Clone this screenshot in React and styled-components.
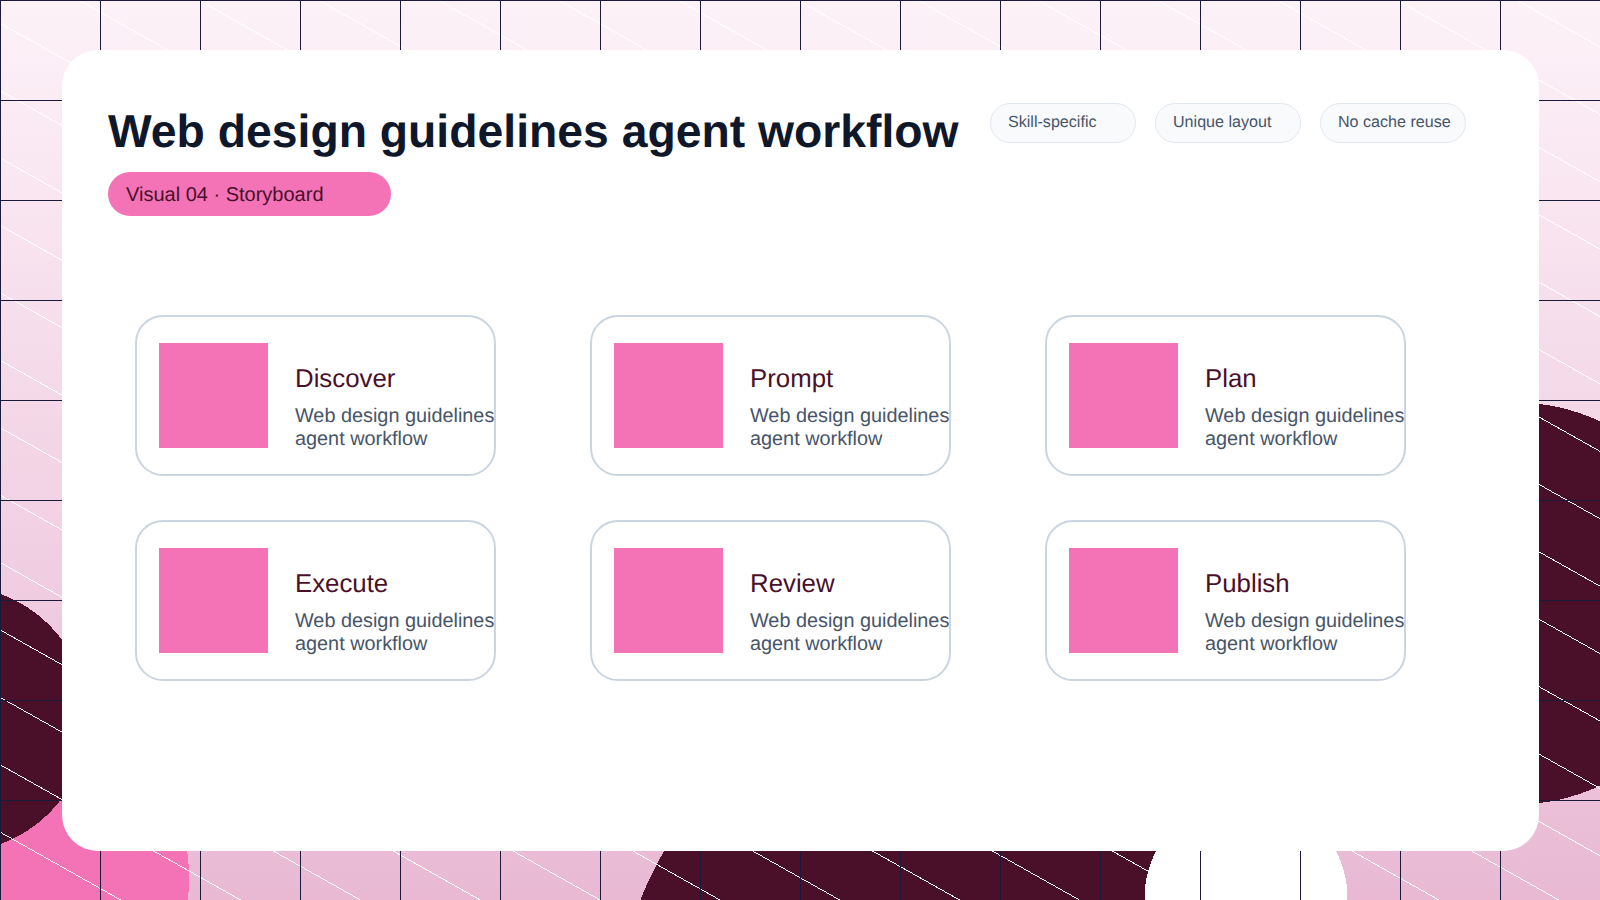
import React from 'react'
import styled, { createGlobalStyle } from 'styled-components'

const GlobalStyle = createGlobalStyle`
  html, body {
    margin: 0;
    padding: 0;
  }
  body {
    font-family: "Liberation Sans", Arial, sans-serif;
    text-rendering: geometricPrecision;
  }
`

const tags = ['Skill-specific', 'Unique layout', 'No cache reuse']
const steps = ['Discover', 'Prompt', 'Plan', 'Execute', 'Review', 'Publish']

const App = () => {
  return (
    <Page>
      <GlobalStyle />
      <Panel>
        <Header>
          <TitleBlock>
            <Title>Web design guidelines agent workflow</Title>
            <Pill>Visual 04 · Storyboard</Pill>
          </TitleBlock>
          <Tags>
            {tags.map((t) => (
              <Tag key={t}>{t}</Tag>
            ))}
          </Tags>
        </Header>
        <Board>
          {steps.map((s) => (
            <Card key={s}>
              <Thumb />
              <CardText>
                <CardTitle>{s}</CardTitle>
                <CardDesc>Web design guidelines agent workflow</CardDesc>
              </CardText>
            </Card>
          ))}
        </Board>
      </Panel>
    </Page>
  )
}

export default App

const Page = styled.div`
  box-sizing: border-box;
  width: 1600px;
  height: 900px;
  overflow: hidden;
  padding: 50px 61px 49px 62px;
  background:
    linear-gradient(90deg, #1a1a3a 1px, transparent 1px) 0 0 / 100px 100px,
    linear-gradient(180deg, #1a1a3a 1px, transparent 1px) 0 0 / 100px 100px,
    repeating-linear-gradient(to top right, #fff 0, #fff 0.9px, transparent 0.9px, transparent 58.75px),
    radial-gradient(circle 101.5px at 1246px 898px, #fff 100%, transparent 100%),
    radial-gradient(circle 201px at 1515px 603.5px, #4a102a 100%, transparent 100%),
    radial-gradient(circle 332px at 950px 1020px, #4a102a 100%, transparent 100%),
    radial-gradient(circle 133px at -45px 719px, #4a102a 100%, transparent 100%),
    radial-gradient(circle 189px at 0 878px, #f472b6 100%, transparent 100%),
    linear-gradient(180deg, #fdf2f8, #e9b9d4);
`
const Panel = styled.div`
  box-sizing: border-box;
  height: 801px;
  padding: 53px 46px;
  background: #fff;
  border-radius: 36px;
`
const Header = styled.div`
  display: flex;
  align-items: flex-start;
`
const TitleBlock = styled.div`
  flex: none;
  width: 850px;
  display: flex;
  flex-direction: column;
  align-items: flex-start;
  gap: 12px;
`
const Title = styled.h1`
  margin: 0;
  font-size: 46.3px;
  line-height: 57px;
  font-weight: 700;
  color: #0f172a;
  white-space: nowrap;
`
const Pill = styled.div`
  box-sizing: border-box;
  width: 283px;
  height: 44px;
  padding: 0 18px;
  border-radius: 22px;
  background: #f472b6;
  color: #4a102a;
  font-size: 20px;
  line-height: 46px;
`
const Tags = styled.div`
  display: flex;
  gap: 19px;
  margin-left: 32px;
`
const Tag = styled.div`
  box-sizing: border-box;
  width: 146px;
  height: 40px;
  padding: 0 17px;
  border: 1px solid #e2e8f0;
  border-radius: 20px;
  background: #f8fafc;
  color: #475569;
  font-size: 16.1px;
  line-height: 36px;
  white-space: nowrap;
`
const Board = styled.div`
  display: grid;
  grid-template-columns: repeat(3, 361px);
  grid-auto-rows: 161px;
  column-gap: 94px;
  row-gap: 44px;
  margin-top: 99px;
  margin-left: 27px;
`
const Card = styled.div`
  box-sizing: border-box;
  display: flex;
  align-items: flex-start;
  gap: 27px;
  padding: 26px 22px;
  border: 2px solid #cbd5e1;
  border-radius: 28px;
`
const Thumb = styled.div`
  flex: none;
  width: 109px;
  height: 105px;
  background: #f472b6;
`
const CardText = styled.div`
  flex: none;
  width: 204px;
  padding-top: 23px;
`
const CardTitle = styled.div`
  font-size: 25.8px;
  line-height: 26px;
  color: #4a102a;
  margin-bottom: 13px;
`
const CardDesc = styled.div`
  font-size: 19.85px;
  line-height: 23px;
  color: #475569;
`
